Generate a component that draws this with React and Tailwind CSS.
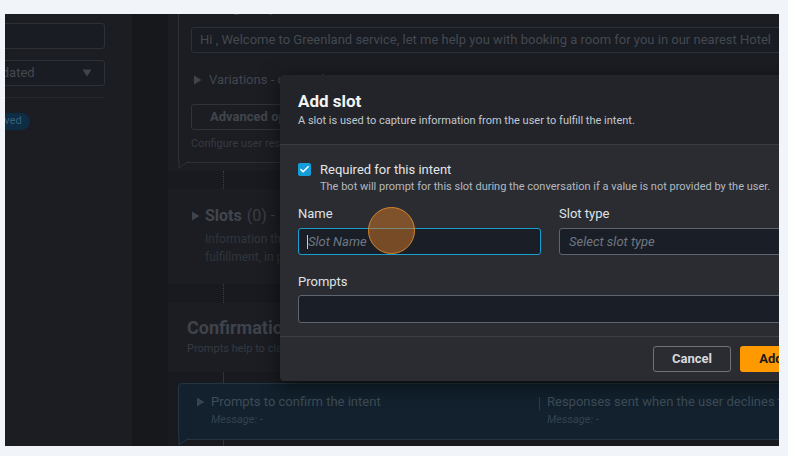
import { Check } from "lucide-react";

function Tail({ stroke, fill }) {
  return (
    <svg className="absolute -bottom-[7px] -left-px" width="14" height="8" viewBox="0 0 14 8">
      <path d="M1 0 L1 7 L11 0" fill={fill} stroke={stroke} strokeWidth="1" />
    </svg>
  );
}

function Caret({ color = "#3f444c" }) {
  return (
    <svg width="9" height="10" viewBox="0 0 9 10" className="shrink-0">
      <path d="M1 0.5 L8.5 5 L1 9.5 Z" fill={color} />
    </svg>
  );
}

function LeftPanel() {
  return (
    <div className="w-[127px] shrink-0 bg-[#1b1d23] overflow-hidden">
      <div className="-ml-[40px] w-[140px] pt-[9px]">
        <div className="h-[26px] rounded-[3px] border border-[#2c3038] bg-[#191c22]" />
        <div className="mt-[11px] h-[26px] rounded-[3px] border border-[#2c3038] bg-[#191c22] flex items-center justify-between pl-[20px] pr-[12px]">
          <span className="text-[13px] text-[#444951]">Updated</span>
          <svg width="10" height="8" viewBox="0 0 10 8">
            <path d="M0.5 0.5 L9.5 0.5 L5 7.5 Z" fill="#40454d" />
          </svg>
        </div>
        <div className="mt-[11px] border-t border-[#25282e]" />
        <div className="mt-[15px] ml-[2px] inline-flex h-[17px] items-center rounded-full bg-[#0e2c44] px-[8px] text-[11px] text-[#34617f]">
          Approved
        </div>
      </div>
    </div>
  );
}

function MainColumn() {
  return (
    <div className="flex-1 min-w-0 bg-[#181a1f] text-[#40454d] overflow-hidden">
      {/* message section */}
      <div className="bg-[#1b1d23] pb-[8px] pl-[10px]">
        <div className="relative -mt-[14px] w-[640px] rounded-[3px] border border-[#2c3038] pt-[2px] pb-[10px] pl-[12px]">
          <div className="h-[16px] leading-[9px] text-[14px] font-bold text-[#3a3e46]">Message - optional</div>
          <div className="mt-[8px] h-[26px] rounded-[3px] border border-[#2c3038] bg-[#191c22] flex items-center pl-[8px] text-[13px] text-[#444951] whitespace-nowrap">
            Hi , Welcome to Greenland service, let me help you with booking a room for you in our nearest Hotel
          </div>
          <div className="mt-[18px] h-[18px] flex items-center gap-[7px] pl-[2px] text-[13px] text-[#41464e]">
            <Caret />
            <span>Variations - optional</span>
          </div>
          <div className="mt-[15px] h-[26px] w-[140px] rounded-[3px] border border-[#2f333b] flex items-center pl-[18px] text-[13px] font-bold text-[#41464e]">
            Advanced options
          </div>
          <div className="mt-[6px] h-[16px] leading-[16px] text-[11px] text-[#363a41]">Configure user responses</div>
          <Tail stroke="#2c3038" fill="#1b1d23" />
        </div>
      </div>
      <div className="h-[18px] ml-[55px] border-l border-dotted border-[#3a3e46]" />
      {/* slots section */}
      <div className="h-[95px] bg-[#1b1d23] pt-[18px]">
        <div className="h-[18px] flex items-center gap-[5px] pl-[23px] whitespace-nowrap">
          <Caret />
          <span className="text-[16px] font-bold text-[#41464e]">Slots</span>
          <span className="text-[16px] text-[#3a3e46]">(0) - optional</span>
        </div>
        <div className="mt-[5px] pl-[37px] text-[12px] leading-[18px] text-[#31353c] whitespace-nowrap">
          <div>Information that a bot needs to fulfill the intent. The bot prompts for slots during intent</div>
          <div>fulfillment, in priority order.</div>
        </div>
      </div>
      <div className="h-[19px] ml-[55px] border-l border-dotted border-[#3a3e46]" />
      {/* confirmation */}
      <div className="h-[69px] bg-[#1b1d23] pt-[14px] pl-[19px] whitespace-nowrap">
        <div className="h-[22px] leading-[22px] text-[18px] font-bold text-[#3f434b]">Confirmation - optional</div>
        <div className="mt-[2px] h-[16px] leading-[16px] text-[11px] text-[#363a41]">
          Prompts help to clarify whether the user wants to fulfill the intent or cancel it.
        </div>
      </div>
      <div className="h-[11px] ml-[55px] border-l border-[#2f333a]" />
      <div className="pl-[10px]">
        <div className="relative h-[57px] w-[640px] rounded-[4px] border border-[#233541] bg-[#12212d] flex whitespace-nowrap">
          <div className="w-[360px] shrink-0 pl-[17px] pt-[9px]">
            <div className="h-[17px] flex items-center gap-[6px] text-[13px] text-[#3e4c57]">
              <Caret color="#34434e" />
              <span>Prompts to confirm the intent</span>
            </div>
            <div className="mt-[2px] pl-[15px] text-[11px] italic text-[#34424d]">Message: -</div>
          </div>
          <div className="shrink-0 mt-[13px] h-[13px] border-l border-[#2c3c48]" />
          <div className="pl-[7px] pt-[9px]">
            <div className="h-[17px] leading-[17px] text-[13px] text-[#3e4c57]">Responses sent when the user declines the intent</div>
            <div className="mt-[2px] text-[11px] italic text-[#34424d]">Message: -</div>
          </div>
          <Tail stroke="#233541" fill="#12212d" />
        </div>
        <div className="h-[20px] ml-[45px] border-l border-[#2f333a]" />
      </div>
    </div>
  );
}

function Modal() {
  return (
    <div className="absolute left-[275px] top-[61px] w-[540px] h-[306px] flex flex-col overflow-hidden rounded-[4px] shadow-[0_4px_20px_rgba(0,0,0,0.6)]">
      <div className="h-[70px] shrink-0 bg-[#222429] px-[18px] pt-[15px] border-b border-[#393c43]">
        <div className="h-[22px] leading-[22px] text-[17px] font-bold text-[#f2f3f3]">Add slot</div>
        <div className="mt-[2px] h-[14px] leading-[14px] text-[11px] text-[#c4c8cf] whitespace-nowrap">
          A slot is used to capture information from the user to fulfill the intent.
        </div>
      </div>
      <div className="flex-1 bg-[#2a2c31] px-[18px] pt-[16px]">
        <div className="flex gap-[9px]">
          <div className="mt-[2px] flex h-[13px] w-[13px] items-center justify-center rounded-[2px] bg-[#149ed9]">
            <Check size={11} strokeWidth={3.5} color="#ffffff" />
          </div>
          <div className="whitespace-nowrap">
            <div className="h-[17px] leading-[17px] text-[13px] text-[#e3e5e8]">Required for this intent</div>
            <div className="mt-[2px] h-[14px] leading-[14px] text-[11px] text-[#b3b8c0]">
              The bot will prompt for this slot during the conversation if a value is not provided by the user.
            </div>
          </div>
        </div>
        <div className="mt-[12px] grid grid-cols-[243px_243px] gap-x-[18px]">
          <div>
            <div className="h-[16px] leading-[16px] text-[13px] text-[#dfe2e6]">Name</div>
            <div className="mt-[6px] h-[27px] rounded-[3px] border border-[#1a9fcc] bg-[#1a1e26] flex items-center pl-[8px]">
              <span className="h-[14px] border-l border-[#c9ced5]" />
              <span className="text-[13px] italic text-[#6f7782]">Slot Name</span>
            </div>
          </div>
          <div>
            <div className="h-[16px] leading-[16px] text-[13px] text-[#dfe2e6]">Slot type</div>
            <div className="mt-[6px] h-[27px] rounded-[3px] border border-[#5d6570] bg-[#1a1e26] flex items-center pl-[9px]">
              <span className="text-[13px] italic text-[#6f7782]">Select slot type</span>
            </div>
          </div>
        </div>
        <div className="mt-[19px] h-[16px] leading-[16px] text-[13px] text-[#dfe2e6]">Prompts</div>
        <div className="mt-[5px] h-[28px] rounded-[3px] border border-[#5d6570] bg-[#1a1e26]" />
      </div>
      <div className="h-[45px] shrink-0 bg-[#2a2c31] border-t border-[#3c3f46] px-[18px] flex items-center justify-end gap-[9px]">
        <div className="h-[26px] w-[78px] rounded-[3px] border border-[#6d737c] flex items-center justify-center text-[13px] font-bold text-[#d5d9de]">
          Cancel
        </div>
        <div className="h-[26px] w-[62px] rounded-[3px] bg-[#ff9900] flex items-center justify-center text-[13px] font-bold text-[#16191f]">
          Add
        </div>
      </div>
    </div>
  );
}

export default function App() {
  return (
    <div className="w-[788px] h-[456px] bg-[#f1f4f9] pt-[14px] pl-[5px]" style={{ fontFamily: "Roboto, 'Liberation Sans', sans-serif" }}>
      <div className="relative w-[774px] h-[432px] overflow-hidden flex">
        <LeftPanel />
        <div className="w-[36px] shrink-0 bg-[#16181c]" />
        <MainColumn />
        <Modal />
        <div className="absolute left-[363px] top-[193px] h-[47px] w-[47px] rounded-full border-[1.5px] border-[#d5852f] bg-[rgba(214,120,40,0.5)]" />
      </div>
    </div>
  );
}
